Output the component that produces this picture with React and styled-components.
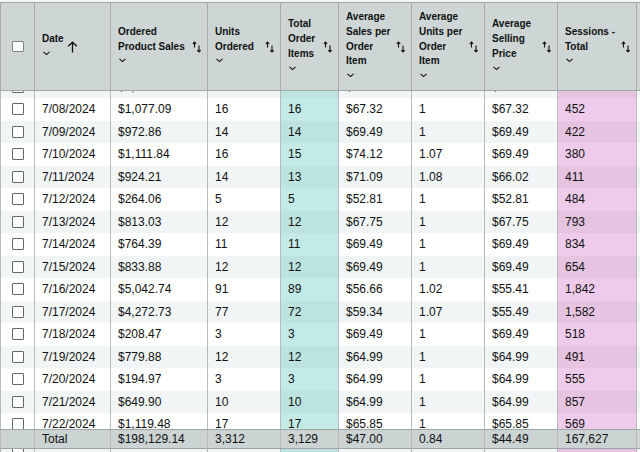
import styled, { createGlobalStyle } from "styled-components";

const GlobalStyle = createGlobalStyle`
  html, body {
    margin: 0;
    padding: 0;
    background: #ffffff;
    overflow: hidden;
  }
  * { box-sizing: border-box; }
`;

const COLS = "34px 76px 97px 73px 58px 73px 73px 73px 79px 90px";

const headers = [
  { label: "Date", active: true },
  { label: "Ordered Product Sales" },
  { label: "Units Ordered" },
  { label: "Total Order Items" },
  { label: "Average Sales per Order Item" },
  { label: "Average Units per Order Item" },
  { label: "Average Selling Price" },
  { label: "Sessions - Total" },
];

const rows = [
  ["7/07/2024", "$1,024.50", "15", "15", "$68.30", "1", "$68.30", "430"],
  ["7/08/2024", "$1,077.09", "16", "16", "$67.32", "1", "$67.32", "452"],
  ["7/09/2024", "$972.86", "14", "14", "$69.49", "1", "$69.49", "422"],
  ["7/10/2024", "$1,111.84", "16", "15", "$74.12", "1.07", "$69.49", "380"],
  ["7/11/2024", "$924.21", "14", "13", "$71.09", "1.08", "$66.02", "411"],
  ["7/12/2024", "$264.06", "5", "5", "$52.81", "1", "$52.81", "484"],
  ["7/13/2024", "$813.03", "12", "12", "$67.75", "1", "$67.75", "793"],
  ["7/14/2024", "$764.39", "11", "11", "$69.49", "1", "$69.49", "834"],
  ["7/15/2024", "$833.88", "12", "12", "$69.49", "1", "$69.49", "654"],
  ["7/16/2024", "$5,042.74", "91", "89", "$56.66", "1.02", "$55.41", "1,842"],
  ["7/17/2024", "$4,272.73", "77", "72", "$59.34", "1.07", "$55.49", "1,582"],
  ["7/18/2024", "$208.47", "3", "3", "$69.49", "1", "$69.49", "518"],
  ["7/19/2024", "$779.88", "12", "12", "$64.99", "1", "$64.99", "491"],
  ["7/20/2024", "$194.97", "3", "3", "$64.99", "1", "$64.99", "555"],
  ["7/21/2024", "$649.90", "10", "10", "$64.99", "1", "$64.99", "857"],
  ["7/22/2024", "$1,119.48", "17", "17", "$65.85", "1", "$65.85", "569"],
  ["", "", "", "", "", "", "", ""],
];

const totals = ["Total", "$198,129.14", "3,312", "3,129", "$47.00", "0.84", "$44.49", "167,627"];

// tone per data column (index into the row values)
const tones = [null, null, null, "teal", null, null, null, "pink"];

function SortIcon() {
  return (
    <IconBox>
      <svg width="10" height="12" viewBox="0 0 10 12" fill="none" stroke="#0f1111" strokeWidth="1.1">
        <path d="M2.5 6.5V1M0.8 2.8L2.5 1L4.2 2.8" />
        <path d="M7 4.5V11M5.3 9.2L7 11L8.7 9.2" />
      </svg>
    </IconBox>
  );
}

function UpArrow() {
  return (
    <IconBox>
      <svg width="11" height="12" viewBox="0 0 11 12" fill="none" stroke="#0f1111" strokeWidth="1.3">
        <path d="M5.5 11.5V1.2M1.2 5.3L5.5 1.2L9.8 5.3" />
      </svg>
    </IconBox>
  );
}

function Chevron() {
  return (
    <svg width="9" height="14" viewBox="0 0 9 14" fill="none" stroke="#0f1111" strokeWidth="1.1">
      <path d="M1.5 4.8L4.5 7.6L7.5 4.8" />
    </svg>
  );
}

export default function App() {
  return (
    <Page>
      <GlobalStyle />
      <Table>
        <HeaderRow>
          <HeadCell $center>
            <Checkbox $head />
          </HeadCell>
          {headers.map((h) => (
            <HeadCell key={h.label} $active={h.active}>
              <HeadText $active={h.active}>
                <span>{h.label}</span>
                <Chevron />
              </HeadText>
              {h.active ? <UpArrow /> : <SortIcon />}
            </HeadCell>
          ))}
          <HeadCell />
        </HeaderRow>
        <Viewport>
          <RowList>
            {rows.map((r, i) => (
              <Row key={i} $alt={i % 2 === 0}>
                <Cell $center>
                  <Checkbox />
                </Cell>
                {r.map((v, j) => (
                  <Cell key={j} $tone={tones[j]} $alt={i % 2 === 0}>
                    {v}
                  </Cell>
                ))}
                <Cell />
              </Row>
            ))}
          </RowList>
          <TotalRow>
            <Cell />
            {totals.map((v, j) => (
              <Cell key={j}>{v}</Cell>
            ))}
            <Cell />
          </TotalRow>
        </Viewport>
      </Table>
    </Page>
  );
}

const Page = styled.div`
  height: 452px;
  padding-top: 2px;
  overflow: hidden;
  background: #f4f6f6;
  font-family: "Liberation Sans", Arial, sans-serif;
  color: #0f1111;
`;

const Table = styled.div`
  width: 746px;
  display: flex;
  flex-direction: column;
`;

const HeaderRow = styled.div`
  display: grid;
  grid-template-columns: ${COLS};
  height: 89px;
  background: #cdd5d5;
  border-top: 1px solid #a3a9aa;
  border-bottom: 1px solid #a3a9aa;
`;

const HeadCell = styled.div`
  display: flex;
  align-items: center;
  justify-content: ${(p) => (p.$center ? "center" : p.$active ? "flex-start" : "space-between")};
  gap: ${(p) => (p.$active ? "3px" : "4px")};
  padding: ${(p) => (p.$center ? "0 0 1px" : "0 5px 0 7px")};
  border-left: 1px solid #a7adae;
  min-width: 0;
`;

const HeadText = styled.div`
  display: flex;
  flex-direction: column;
  align-items: flex-start;
  flex: ${(p) => (p.$active ? "0 0 auto" : "1 1 auto")};
  min-width: 0;
  font-size: 10px;
  font-weight: 700;
  line-height: 14.7px;

  svg {
    display: block;
  }
`;

const IconBox = styled.span`
  display: flex;
  flex: 0 0 auto;

  svg {
    display: block;
  }
`;

const Viewport = styled.div`
  position: relative;
  height: 400px;
  overflow: hidden;
  background: #ffffff;
`;

const RowList = styled.div`
  margin-top: -15.5px;
  display: flex;
  flex-direction: column;
`;

const Row = styled.div`
  display: grid;
  grid-template-columns: ${COLS};
  height: 22.5px;
  background: ${(p) => (p.$alt ? "#f1f5f6" : "#ffffff")};
`;

const toneColor = (p) => {
  if (p.$tone === "teal") return p.$alt ? "#bde3e1" : "#c4eae7";
  if (p.$tone === "pink") return p.$alt ? "#e6c3e1" : "#eecbea";
  return "transparent";
};

const Cell = styled.div`
  display: flex;
  align-items: center;
  justify-content: ${(p) => (p.$center ? "center" : "flex-start")};
  padding: ${(p) => (p.$center ? "0" : "0 7px")};
  border-left: 1px solid #b7bbbc;
  background: ${toneColor};
  font-size: 12px;
  white-space: nowrap;
  overflow: hidden;
`;

const Checkbox = styled.span`
  display: block;
  width: 12px;
  height: ${(p) => (p.$head ? "11px" : "12px")};
  margin-left: 1px;
  background: #ffffff;
  border: 1px solid ${(p) => (p.$head ? "#7d8485" : "#60676a")};
  border-radius: 1px;
`;

const TotalRow = styled.div`
  position: absolute;
  top: 338px;
  left: 0;
  display: grid;
  grid-template-columns: ${COLS};
  width: 746px;
  height: 20px;
  background: #cbd3d3;
  border-top: 1px solid #9fa5a6;
  border-bottom: 1px solid #9fa5a6;
`;
